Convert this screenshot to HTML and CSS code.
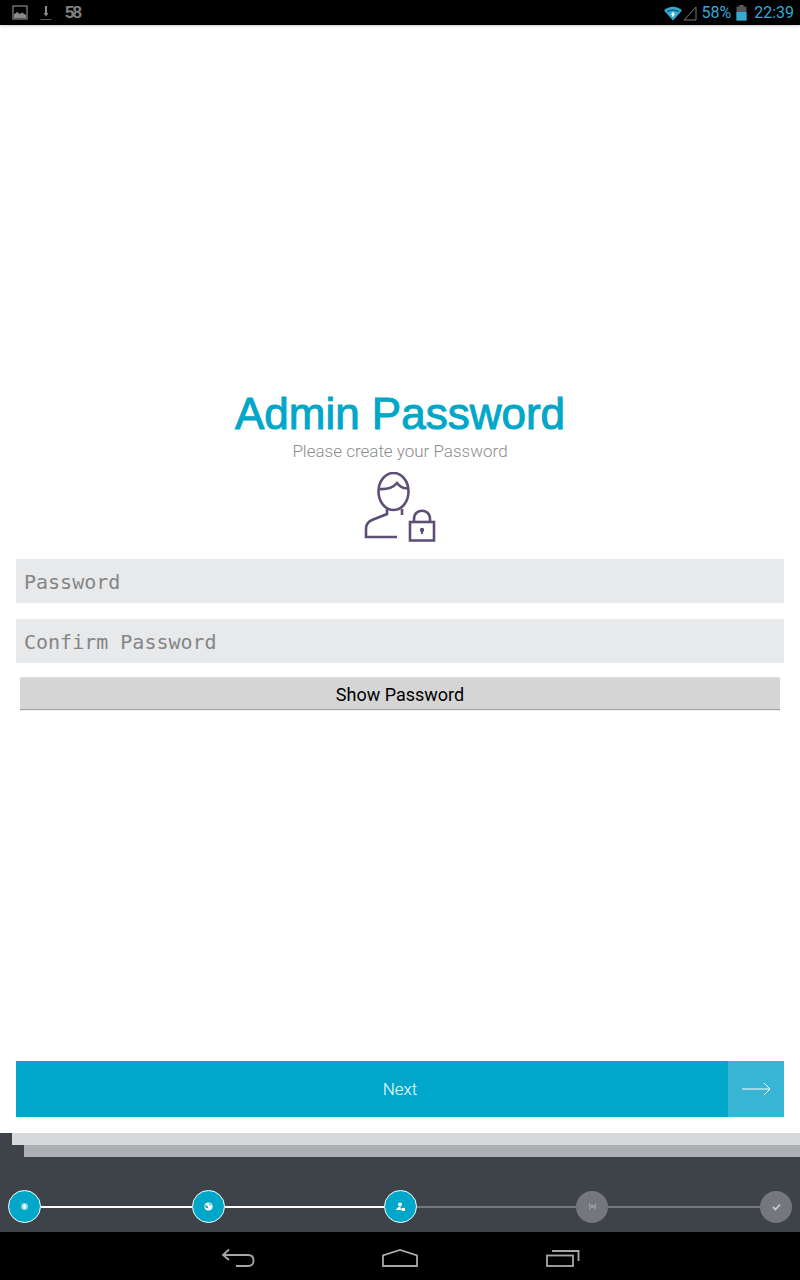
FILE: index.html
```html
<!DOCTYPE html>
<html lang="en">
<head>
<meta charset="utf-8">
<title>Admin Password</title>
<link rel="stylesheet" href="styles.css">
</head>
<body>
<div class="screen">
  <header class="status">
    <div class="status-left">
      <svg class="ic-pic" width="16" height="15" viewBox="0 0 16 15"><rect x="1" y="1" width="14" height="13" fill="none" stroke="#8a8a8a" stroke-width="1.200"/><path d="M2 13V9.500l3-2.500 3 2 2-1.500 4 2.500v3z" fill="#8a8a8a"/></svg>
      <svg class="ic-dl" width="14" height="16" viewBox="0 0 14 16"><path d="M6 1h2v7h1.500L7 11.500 4.500 8H6z" fill="#8a8a8a"/><rect x="1.500" y="14" width="11" height="1" fill="#555"/></svg>
      <span class="badge">58</span>
    </div>
    <div class="status-right">
      <svg width="20" height="16" viewBox="0 0 20 16"><path d="M1 5.500C6 0.500 14 0.500 19 5.500L10 15.500z" fill="#33a9d5"/><path d="M4.500 6.500C7.500 4.500 12.500 4.500 15.500 6.500" stroke="#0b3a4a" stroke-width="1.200" fill="none"/><path d="M10 7l2.500 2.500h-1.500v2h-2v-2h-1.500z" fill="#fff"/></svg>
      <svg class="ic-sig" width="14" height="16" viewBox="0 0 14 16"><path d="M1 15L13 2V15z" fill="none" stroke="#777" stroke-width="1"/></svg>
      <span class="pct">58%</span>
      <svg class="ic-bat" width="11" height="16" viewBox="0 0 11 16"><rect x="3.500" y="0" width="4" height="2" fill="#666"/><rect x="0.500" y="1.500" width="10" height="14" fill="#555"/><rect x="0.500" y="7" width="10" height="8.500" fill="#33a9d5"/></svg>
      <span class="time">22:39</span>
    </div>
  </header>

  <main class="content">
    <h1 class="title">Admin Password</h1>
    <p class="subtitle">Please create your Password</p>
    <svg class="hero" width="72" height="70" viewBox="0 0 72 70" fill="none" stroke="#5f4e76" stroke-width="2.600">
      <ellipse cx="29.500" cy="19.500" rx="15" ry="18.500"/>
      <path d="M14.500 17C22 17.500 29 16 33 11C36 15 40 17 44.500 16"/>
      <path d="M23 37V42L8 48C3.500 50 2 53 2 57V65H33"/>
      <path d="M38 37V43"/>
      <rect x="46" y="50" width="24" height="18.500"/>
      <path d="M50 50V47C50 36 66 36 66 47V50"/>
      <path d="M58 58v4" stroke-width="2"/>
      <circle cx="58" cy="58" r="2.200" fill="#5f4e76" stroke="none"/>
    </svg>
    <input class="field" type="text" placeholder="Password">
    <input class="field field-second" type="text" placeholder="Confirm Password">
    <button class="show" type="button">Show Password</button>
    <div class="spacer"></div>
    <button class="next" type="button">
      <span class="next-label">Next</span>
      <span class="next-arrow">
        <svg width="30" height="14" viewBox="0 0 30 14" fill="none" stroke="#fff" stroke-width="1"><path d="M1 7H28M23 1l6 6-6 6"/></svg>
      </span>
    </button>
  </main>

  <footer class="wizard">
    <div class="stripe stripe-one"></div>
    <div class="stripe stripe-two"></div>
    <div class="steps">
      <span class="dot on"><svg width="9" height="9" viewBox="0 0 9 9"><circle cx="4.500" cy="4.500" r="3.500" fill="#8fd6e6"/><rect x="3.300" y="2" width="2.400" height="5" rx="1" fill="#fff"/></svg></span>
      <span class="line on w-a"></span>
      <span class="dot on"><svg width="9" height="9" viewBox="0 0 9 9"><circle cx="4.500" cy="4.500" r="4" fill="#fff"/><path d="M1 3l2.500 1 1 2.500-3-1zM5.500 1l2 2-2 .5z" fill="#00a7c9"/></svg></span>
      <span class="line on w-b"></span>
      <span class="dot on"><svg width="11" height="10" viewBox="0 0 11 10"><circle cx="5" cy="2.500" r="2" fill="#fff"/><path d="M0.500 8l3-3h2l.5 3z" fill="#fff"/><rect x="6.500" y="6" width="3.500" height="3" fill="#fff"/></svg></span>
      <span class="line w-b"></span>
      <span class="dot off"><svg width="9" height="9" viewBox="0 0 9 9"><path d="M1 1.500h1.500v6H1zM6.500 1.500H8v6H6.500zM3 3h3v3H3z" fill="#9a9ca1"/></svg></span>
      <span class="line w-c"></span>
      <span class="dot off"><svg width="9" height="8" viewBox="0 0 9 8"><path d="M1 4l2.500 2.500L8 1.500" fill="none" stroke="#c8c9cc" stroke-width="1.800"/></svg></span>
    </div>
  </footer>

  <nav class="navbar">
    <svg width="34" height="20" viewBox="0 0 34 20" fill="none" stroke="#a8a8a8" stroke-width="1.800"><path d="M8 1.500L2 7l6 5M2 7H27C31 7 32.500 9 32.500 12.500S31 18 27 18H15"/></svg>
    <svg width="36" height="18" viewBox="0 0 36 18" fill="none" stroke="#a8a8a8" stroke-width="1.800"><path d="M1 17V6.500L18 1l17 5.500V17z"/></svg>
    <svg class="ic-recent" width="34" height="18" viewBox="0 0 34 18" fill="none" stroke="#a8a8a8" stroke-width="1.800"><rect x="1" y="6.500" width="26" height="10.500"/><path d="M6 2h26.500V12"/></svg>
  </nav>
</div>
</body>
</html>
```

FILE: styles.css
```css
* { box-sizing: border-box; }
html, body { margin: 0; padding: 0; background: #fff; }
.screen {
  width: 800px;
  height: 1280px;
  display: flex;
  flex-direction: column;
  overflow: hidden;
}
.status {
  height: 25px;
  flex: none;
  background: #000;
  display: flex;
  justify-content: space-between;
  align-items: center;
  padding: 0 6px 0 12px;
  box-shadow: 0 1px 3px rgba(0, 0, 0, 0.2);
  position: relative;
}
.status-left, .status-right { display: flex; align-items: center; }
.ic-dl { margin-left: 11px; }
.badge {
  margin-left: 12px;
  color: #808080;
  font: bold 17px/25px "Liberation Sans", sans-serif;
  letter-spacing: -2px;
}
.pct {
  margin-left: 4px;
  color: #33a9d5;
  font: 16px/25px Roboto, sans-serif;
}
.ic-bat { margin-left: 5px; }
.time {
  margin-left: 7px;
  color: #33a9d5;
  font: 16px/25px Roboto, sans-serif;
}
.content {
  flex: 1;
  display: flex;
  flex-direction: column;
  align-items: center;
  padding: 365px 16px 16px;
}
.title {
  margin: 0;
  color: #00a7c9;
  font: 44px/48px "Liberation Sans", Arial, sans-serif;
  -webkit-text-stroke: 1px #00a7c9;
}
.subtitle {
  margin: 1px 0 0;
  color: #8c8c8c;
  font: 300 17px/24px Roboto, sans-serif;
}
.hero { margin-top: 9px; flex: none; }
.field {
  width: 100%;
  height: 44px;
  flex: none;
  margin-top: 17px;
  padding: 2px 8px 0;
  border: 0;
  background: #e8e9eb;
  font: 20px "DejaVu Sans Mono", monospace;
  color: #808080;
}
.field::placeholder { color: #858585; opacity: 1; }
.field-second { margin-top: 16px; }
.show {
  width: 760px;
  height: 33px;
  flex: none;
  margin-top: 14px;
  padding: 2px 0 0;
  border: 0;
  border-top: 1px solid #dedede;
  border-bottom: 1px solid #a4a4a4;
  box-shadow: 0 1px 0 #eee;
  background: #d5d5d5;
  color: #000;
  font: 18px/28px Roboto, sans-serif;
}
.spacer { flex: 1; }
.next {
  width: 100%;
  height: 56px;
  flex: none;
  padding: 0;
  border: 0;
  display: flex;
  background: #00a7c9;
}
.next-label {
  flex: 1;
  padding: 0 0 0 56px;
  color: #fff;
  font: 300 17px/56px Roboto, sans-serif;
}
.next-arrow {
  width: 56px;
  height: 56px;
  background: #38b4d4;
  display: flex;
  align-items: center;
  justify-content: center;
}
.wizard {
  height: 99px;
  flex: none;
  background: #3e4249;
  display: flex;
  flex-direction: column;
}
.stripe { height: 12px; flex: none; }
.stripe-one { margin-left: 12px; background: #d7d8da; }
.stripe-two { margin-left: 24px; background: #aeafb2; }
.steps {
  display: flex;
  align-items: center;
  padding: 33px 8px 0;
}
.dot {
  flex: none;
  border-radius: 50%;
  display: flex;
  align-items: center;
  justify-content: center;
}
.dot.on { width: 33px; height: 33px; background: #00a7c9; border: 1px solid #fff; }
.dot.off { width: 32px; height: 32px; background: #74777e; }
.line { height: 2px; background: #74777e; flex: none; }
.line.on { background: #fff; }
.w-a { width: 151px; }
.w-b { width: 159px; }
.w-c { width: 152px; }
.navbar {
  height: 48px;
  flex: none;
  background: #000;
  display: flex;
  align-items: center;
  justify-content: center;
  gap: 127px;
  padding-top: 3px;
}
.ic-recent { margin: 0 -1px 0 1px; }
```
